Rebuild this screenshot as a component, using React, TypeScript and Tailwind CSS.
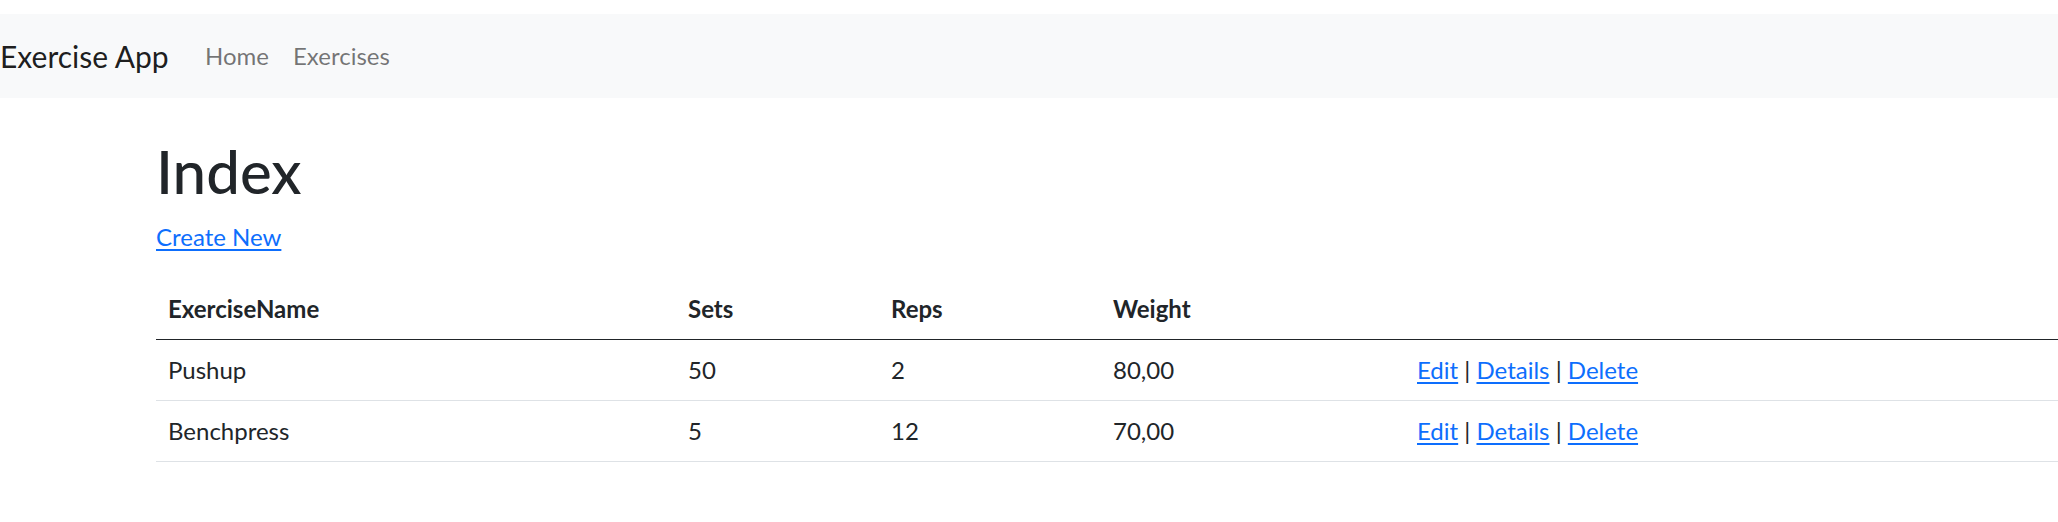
const exercises = [
  { name: 'Pushup', sets: 50, reps: 2, weight: '80,00' },
  { name: 'Benchpress', sets: 5, reps: 12, weight: '70,00' },
]

const linkCls = 'text-[#0d6efd] underline underline-offset-[3px]'

const App = () => {
  return (
    <div className="min-h-screen overflow-hidden bg-white pt-[14px] font-['Lato','Liberation_Sans',sans-serif] text-[24px] leading-[36px] text-[#212529]">
      <nav className="flex h-[84px] items-center bg-[#f8f9fa]">
        <a href="#" className="mr-[24px] w-[169px] text-[30px] leading-[45px] text-black/90">
          Exercise App
        </a>
        <ul className="flex">
          <li><a href="#" className="px-[12px] text-black/55">Home</a></li>
          <li><a href="#" className="px-[12px] text-black/55">Exercises</a></li>
        </ul>
      </nav>

      <main className="pl-[156px] pt-[37px]">
        <h1 className="mb-[12px] text-[60px] font-medium leading-[72px]">Index</h1>
        <p className="mb-[24px]">
          <a href="#" className={linkCls}>Create New</a>
        </p>

        <table className="w-[1902px] table-fixed border-collapse text-left">
          <thead>
            <tr className="border-b border-[#212529]">
              <th className="w-[520px] px-[12px] py-[12px] font-bold">ExerciseName</th>
              <th className="w-[203px] px-[12px] py-[12px] font-bold">Sets</th>
              <th className="w-[222px] px-[12px] py-[12px] font-bold">Reps</th>
              <th className="w-[304px] px-[12px] py-[12px] font-bold">Weight</th>
              <th className="px-[12px] py-[12px]"></th>
            </tr>
          </thead>
          <tbody>
            {exercises.map((ex) => (
              <tr key={ex.name} className="border-b border-[#dee2e6]">
                <td className="px-[12px] py-[12px]">{ex.name}</td>
                <td className="px-[12px] py-[12px]">{ex.sets}</td>
                <td className="px-[12px] py-[12px]">{ex.reps}</td>
                <td className="px-[12px] py-[12px]">{ex.weight}</td>
                <td className="px-[12px] py-[12px]">
                  <a href="#" className={linkCls}>Edit</a> |{' '}
                  <a href="#" className={linkCls}>Details</a> |{' '}
                  <a href="#" className={linkCls}>Delete</a>
                </td>
              </tr>
            ))}
          </tbody>
        </table>
      </main>
    </div>
  )
}

export default App
